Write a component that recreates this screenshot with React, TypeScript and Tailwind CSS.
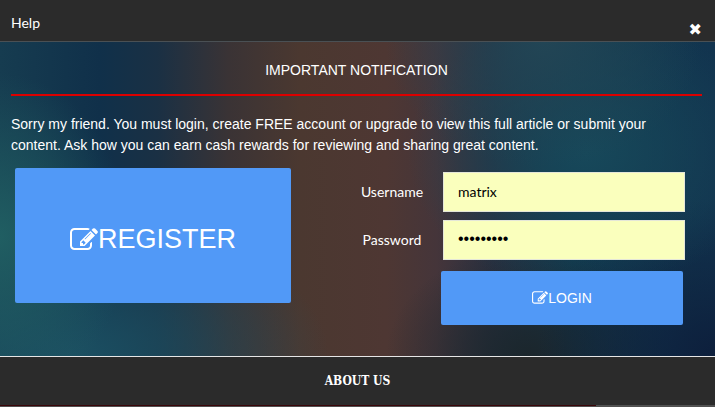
import React, { useState } from "react";

const EditIcon = ({ className }: { className: string }) => (
  <svg viewBox="0 0 1792 1792" fill="currentColor" aria-hidden="true" className={className}>
    <path d="M888 1184l116-116-152-152-116 116v56h96v96h56zm440-720q-16-16-33 1l-350 350q-17 17-1 33t33-1l350-350q17-17 1-33zm80 594v190q0 119-84.5 203.5t-203.5 84.5h-832q-119 0-203.5-84.5t-84.5-203.5v-832q0-119 84.5-203.5t203.5-84.5h832q63 0 117 25 15 7 18 23 3 17-9 29l-49 49q-14 14-32 8-23-6-45-6h-832q-66 0-113 47t-47 113v832q0 66 47 113t113 47h832q66 0 113-47t47-113v-126q0-13 9-22l64-64q15-15 35-7t20 29zm-96-738l288 288-672 672h-288v-288zm444 132l-92 92-288-288 92-92q28-28 68-28t68 28l152 152q28 28 28 68t-28 68z" />
  </svg>
);

const fields = [
  { id: "username", label: "Username", type: "text", font: "text-sm" },
  { id: "password", label: "Password", type: "password", font: "text-base font-['Liberation_Sans',sans-serif]" },
] as const;

export default function App() {
  const [values, setValues] = useState({ username: "matrix", password: "matrix123" });

  return (
    <div className="bg-[#2b2b2b] text-sm text-white font-['Liberation_Sans',Arial,sans-serif]">
      {/* Header */}
      <header className="flex h-[42px] items-start justify-between border-b border-[#4a5054] pl-[11px] pr-[13px]">
        <h1 className="pt-3 leading-[22px] font-['Lato',sans-serif]">Help</h1>
        <button type="button" aria-label="Close" className="pt-5 text-base leading-5 font-bold font-['DejaVu_Sans',sans-serif]">
          ✖
        </button>
      </header>

      {/* Notification */}
      <main className="bg-[#4b362f] bg-[radial-gradient(ellipse_18%_52%_at_0%_62%,#205e62_0%,#205e6200_100%),radial-gradient(ellipse_36%_45%_at_10%_100%,#1c5062_0%,#1c506200_100%),radial-gradient(ellipse_22%_40%_at_76%_0%,#224555_0%,#22455500_100%),radial-gradient(ellipse_25%_45%_at_82%_35%,#17485a_0%,#17485a00_100%),radial-gradient(ellipse_25%_50%_at_100%_100%,#0d1f3c_0%,#0d1f3c00_100%),radial-gradient(ellipse_20%_35%_at_74%_100%,#1b262c_0%,#1b262c00_100%),linear-gradient(90deg,#163c50_0%,#10304a_14%,#1a3044_22%,#3a3335_32%,#4b3830_42%,#4e3733_54%,#45353a_61%,#293040_69%,#11384d_80%,#12344f_100%)] pr-[13px] pb-[31px] pl-[11px]">
        <h2 className="pt-[17px] pb-[13px] text-center leading-[22px]">IMPORTANT NOTIFICATION</h2>
        <hr className="border-t-2 border-[#dc0000]" />
        <p className="pt-[18px] pr-6 leading-[21px]">
          Sorry my friend. You must login, create FREE account or upgrade to view this full article or submit your
          content. Ask how you can earn cash rewards for reviewing and sharing great content.
        </p>

        <div className="flex items-start justify-between pt-3 pr-[17px] pl-1">
          <button
            type="button"
            className="flex h-[135px] w-[276px] items-center justify-center rounded-xs bg-[#5199f7] pt-2 text-[27px]"
          >
            <EditIcon className="size-7" />
            REGISTER
          </button>

          <form className="flex flex-col gap-2 pt-1" onSubmit={(e) => e.preventDefault()}>
            {fields.map((field) => (
              <div key={field.id} className="flex items-center gap-4 font-['Lato',sans-serif]">
                <label htmlFor={field.id} className="w-[70px] text-center">
                  {field.label}
                </label>
                <input
                  id={field.id}
                  type={field.type}
                  value={values[field.id]}
                  onChange={(e) => setValues({ ...values, [field.id]: e.target.value })}
                  className={`h-10 w-[242px] border border-[#e4e6d8] bg-[#faffbd] px-3.5 pb-0.5 text-black ${field.font}`}
                />
              </div>
            ))}
            <button
              type="submit"
              className="mt-[3px] mr-0.5 flex h-[54px] w-[242px] items-center justify-center self-end rounded-xs bg-[#5199f7]"
            >
              <EditIcon className="size-4" />
              LOGIN
            </button>
          </form>
        </div>
      </main>

      {/* Footer */}
      <footer className="border-t border-[#e6e6e6]">
        <h2 className="py-3 text-center text-xs leading-6 font-black font-['DejaVu_Serif_Condensed','DejaVu_Serif',serif]">
          ABOUT US
        </h2>
        <div className="flex h-0.5 bg-[#505050]">
          <div className="h-px w-5/6 bg-[#3a0508]" />
        </div>
      </footer>
    </div>
  );
}
